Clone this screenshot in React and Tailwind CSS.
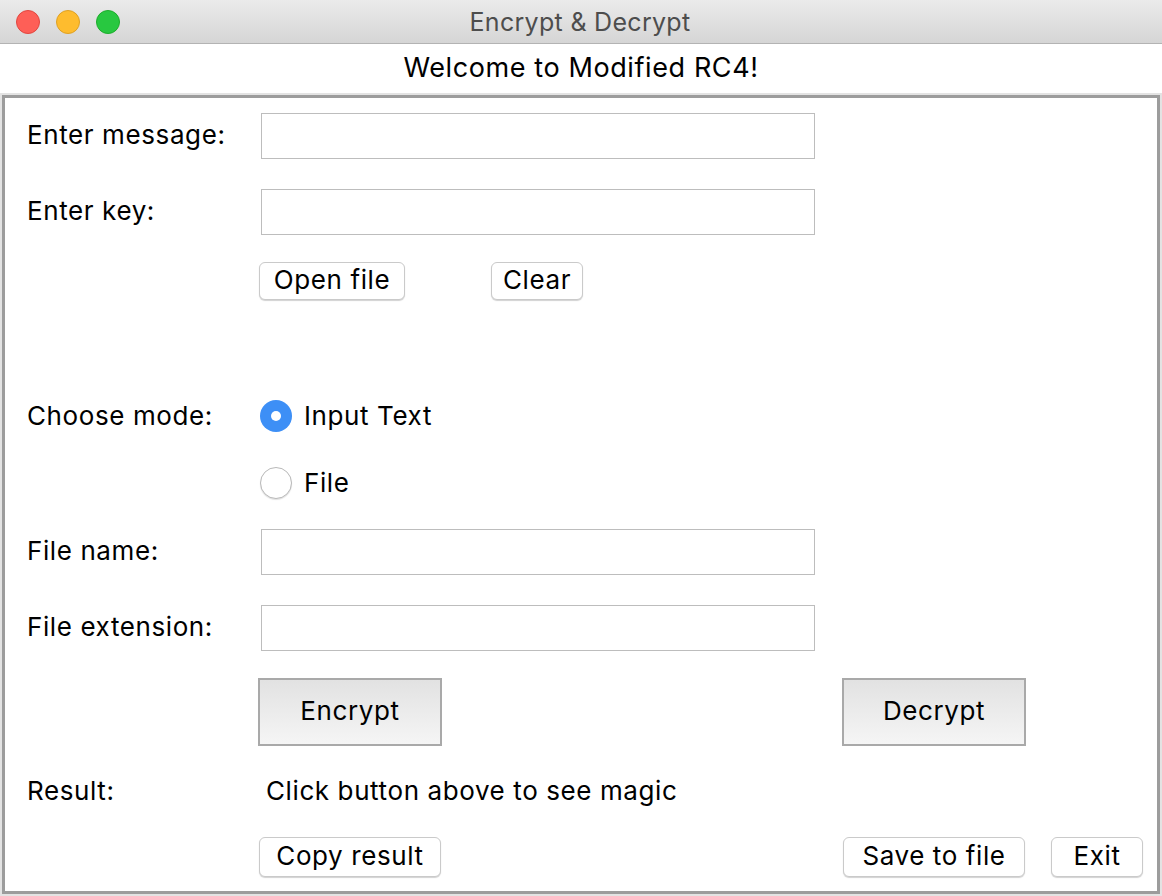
import React, { useState } from 'react';

// =============================================================================
// Encrypt & Decrypt window (Swing/Aqua look)
// =============================================================================
const font = { fontFamily: 'Inter, "Liberation Sans", sans-serif' };

const SmallButton = ({ children, width, className = '' }) => (
  <button
    className={`h-[38px] pb-[4px] bg-white border border-[#cacaca] rounded-[6px] shadow-[0_1px_1px_rgba(0,0,0,0.18)] text-[26px] tracking-[0.6px] text-black flex items-center justify-center ${className}`}
    style={{ width }}
  >
    {children}
  </button>
);

const BigButton = ({ children, className = '' }) => (
  <button
    className={`w-[184px] h-[68px] pb-[4px] border-2 border-[#a9a9a9] bg-gradient-to-b from-[#e2e2e2] to-[#f5f5f5] text-[26px] tracking-[0.6px] text-black flex items-center justify-center ${className}`}
  >
    {children}
  </button>
);

const Field = ({ label, mt }) => (
  <div className={`flex items-center h-[46px] ${mt}`}>
    <div className="w-[256px] pl-[22px] pb-[4px] text-[26px] tracking-[0.6px] text-black">{label}</div>
    <div className="w-[554px] h-[46px] border border-[#bdbdbd] bg-white"></div>
  </div>
);

const Radio = ({ checked, label, onClick }) => (
  <div className="flex items-center cursor-pointer" onClick={onClick}>
    {checked ? (
      <div className="w-[32px] h-[32px] rounded-full bg-[#3d8ff6] flex items-center justify-center">
        <div className="w-[10px] h-[10px] rounded-full bg-white"></div>
      </div>
    ) : (
      <div className="w-[32px] h-[32px] rounded-full bg-white border border-[#b9b9b9] shadow-[0_1px_1px_rgba(0,0,0,0.12)]"></div>
    )}
    <span className="ml-[12px] pb-[2px] text-[26px] tracking-[0.6px] text-black">{label}</span>
  </div>
);

export default function App() {
  const [mode, setMode] = useState('text');

  return (
    <div className="w-[1162px] h-[896px] bg-white flex flex-col overflow-hidden" style={font}>
      {/* title bar */}
      <div className="h-[44px] flex-none flex items-center bg-gradient-to-b from-[#ebebeb] to-[#d5d5d5] border-b border-[#b3b3b3]">
        <div className="flex items-center gap-[16px] pl-[16px]">
          <div className="w-[24px] h-[24px] rounded-full bg-[#fe5f57] border border-[#e2463f]"></div>
          <div className="w-[24px] h-[24px] rounded-full bg-[#febc2e] border border-[#dfa123]"></div>
          <div className="w-[24px] h-[24px] rounded-full bg-[#28c840] border border-[#1dad2b]"></div>
        </div>
        <div className="flex-1 text-center pt-[2px] text-[25px] tracking-[0.3px] text-[#4d4d4d] pr-[122px]">Encrypt &amp; Decrypt</div>
      </div>

      {/* welcome */}
      <div className="h-[49px] flex-none flex items-center justify-center text-[27px] tracking-[0.6px] text-black">
        Welcome to Modified RC4!
      </div>

      {/* main panel */}
      <div className="flex-1 border-2 border-[#e3e3e3] flex">
        <div className="flex-1 border-[3px] border-[#9c9c9c] flex flex-col">
          <Field label="Enter message:" mt="mt-[15px]" />
          <Field label="Enter key:" mt="mt-[30px]" />

          <div className="flex items-center h-[38px] mt-[27px]">
            <div className="w-[254px]"></div>
            <SmallButton width={146}>Open file</SmallButton>
            <SmallButton width={92} className="ml-[86px]">Clear</SmallButton>
          </div>

          <div className="flex items-center h-[46px] mt-[93px]">
            <div className="w-[255px] pl-[22px] pb-[2px] text-[26px] tracking-[0.6px] text-black">Choose mode:</div>
            <Radio checked={mode === 'text'} label="Input Text" onClick={() => setMode('text')} />
          </div>
          <div className="flex items-center h-[46px] mt-[21px]">
            <div className="w-[255px]"></div>
            <Radio checked={mode === 'file'} label="File" onClick={() => setMode('file')} />
          </div>

          <Field label="File name:" mt="mt-[23px]" />
          <Field label="File extension:" mt="mt-[30px]" />

          <div className="flex items-center h-[68px] mt-[27px]">
            <div className="w-[253px]"></div>
            <BigButton>Encrypt</BigButton>
            <BigButton className="ml-[400px]">Decrypt</BigButton>
          </div>

          <div className="flex items-center h-[30px] mt-[30px] pb-[2px] text-[26px] tracking-[0.6px] text-black">
            <div className="w-[261px] pl-[22px]">Result:</div>
            <div>Click button above to see magic</div>
          </div>

          <div className="flex items-center h-[40px] mt-[31px]">
            <div className="w-[254px]"></div>
            <SmallButton width={182} className="h-[40px]">Copy result</SmallButton>
            <SmallButton width={182} className="h-[40px] ml-[402px]">Save to file</SmallButton>
            <SmallButton width={92} className="h-[40px] ml-[26px]">Exit</SmallButton>
          </div>
        </div>
      </div>
    </div>
  );
}
